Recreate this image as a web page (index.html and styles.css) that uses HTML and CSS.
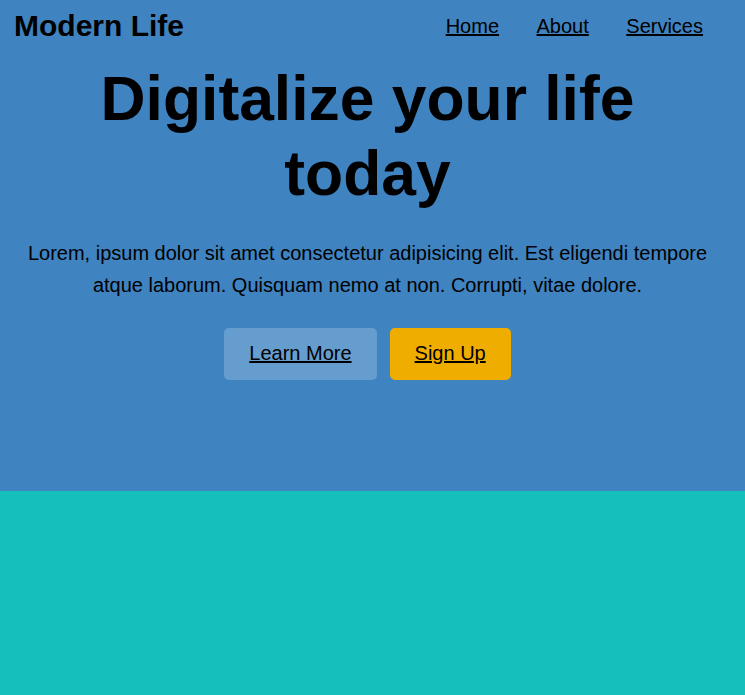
FILE: index.html
```html
<!DOCTYPE html>
<html lang="en">
<head>
<meta charset="utf-8">
<title>Modern Life</title>
<link rel="stylesheet" href="styles.css">
</head>
<body>
<section class="hero">
  <header class="header">
    <div class="logo">Modern Life</div>
    <nav class="nav">
      <a href="#">Home</a>
      <a href="#">About</a>
      <a href="#">Services</a>
    </nav>
  </header>
  <div class="hero-content">
    <h1 class="title">Digitalize your life today</h1>
    <p class="lead">Lorem, ipsum dolor sit amet consectetur adipisicing elit. Est eligendi tempore atque laborum. Quisquam nemo at non. Corrupti, vitae dolore.</p>
    <div class="actions">
      <a href="#" class="btn btn-light">Learn More</a>
      <a href="#" class="btn btn-yellow">Sign Up</a>
    </div>
  </div>
</section>
<section class="next"></section>
</body>
</html>
```

FILE: styles.css
```css
* { box-sizing: border-box; }
html, body { margin: 0; padding: 0; }
body {
  font-family: "Liberation Sans", Arial, sans-serif;
  color: #000;
  background: #15bfbc;
}
.hero {
  background: #3f83c1;
  height: 491px;
}
.header {
  display: flex;
  justify-content: space-between;
  align-items: center;
  padding: 9px 42px 0 14px;
}
.logo {
  font-size: 30px;
  font-weight: bold;
}
.nav {
  display: flex;
  gap: 37.5px;
  padding-top: 1px;
}
.nav a {
  color: #000;
  font-size: 20px;
}
.hero-content {
  text-align: center;
  padding: 0 25px 0 15px;
}
.title {
  font-size: 62.4px;
  font-weight: bold;
  margin: 18px auto 0;
  max-width: 620px;
  line-height: 75px;
}
.lead {
  font-size: 20px;
  line-height: 32px;
  margin: 26px 0 0;
}
.actions {
  display: flex;
  justify-content: center;
  gap: 13px;
  margin-top: 27px;
}
.btn {
  display: inline-block;
  color: #000;
  font-size: 20px;
  padding: 14px 25px 15px;
  border-radius: 5px;
}
.btn-light { background: #669dcf; }
.btn-yellow { background: #efad00; }
.next {
  height: 204px;
  background: #15bfbc;
}
```
